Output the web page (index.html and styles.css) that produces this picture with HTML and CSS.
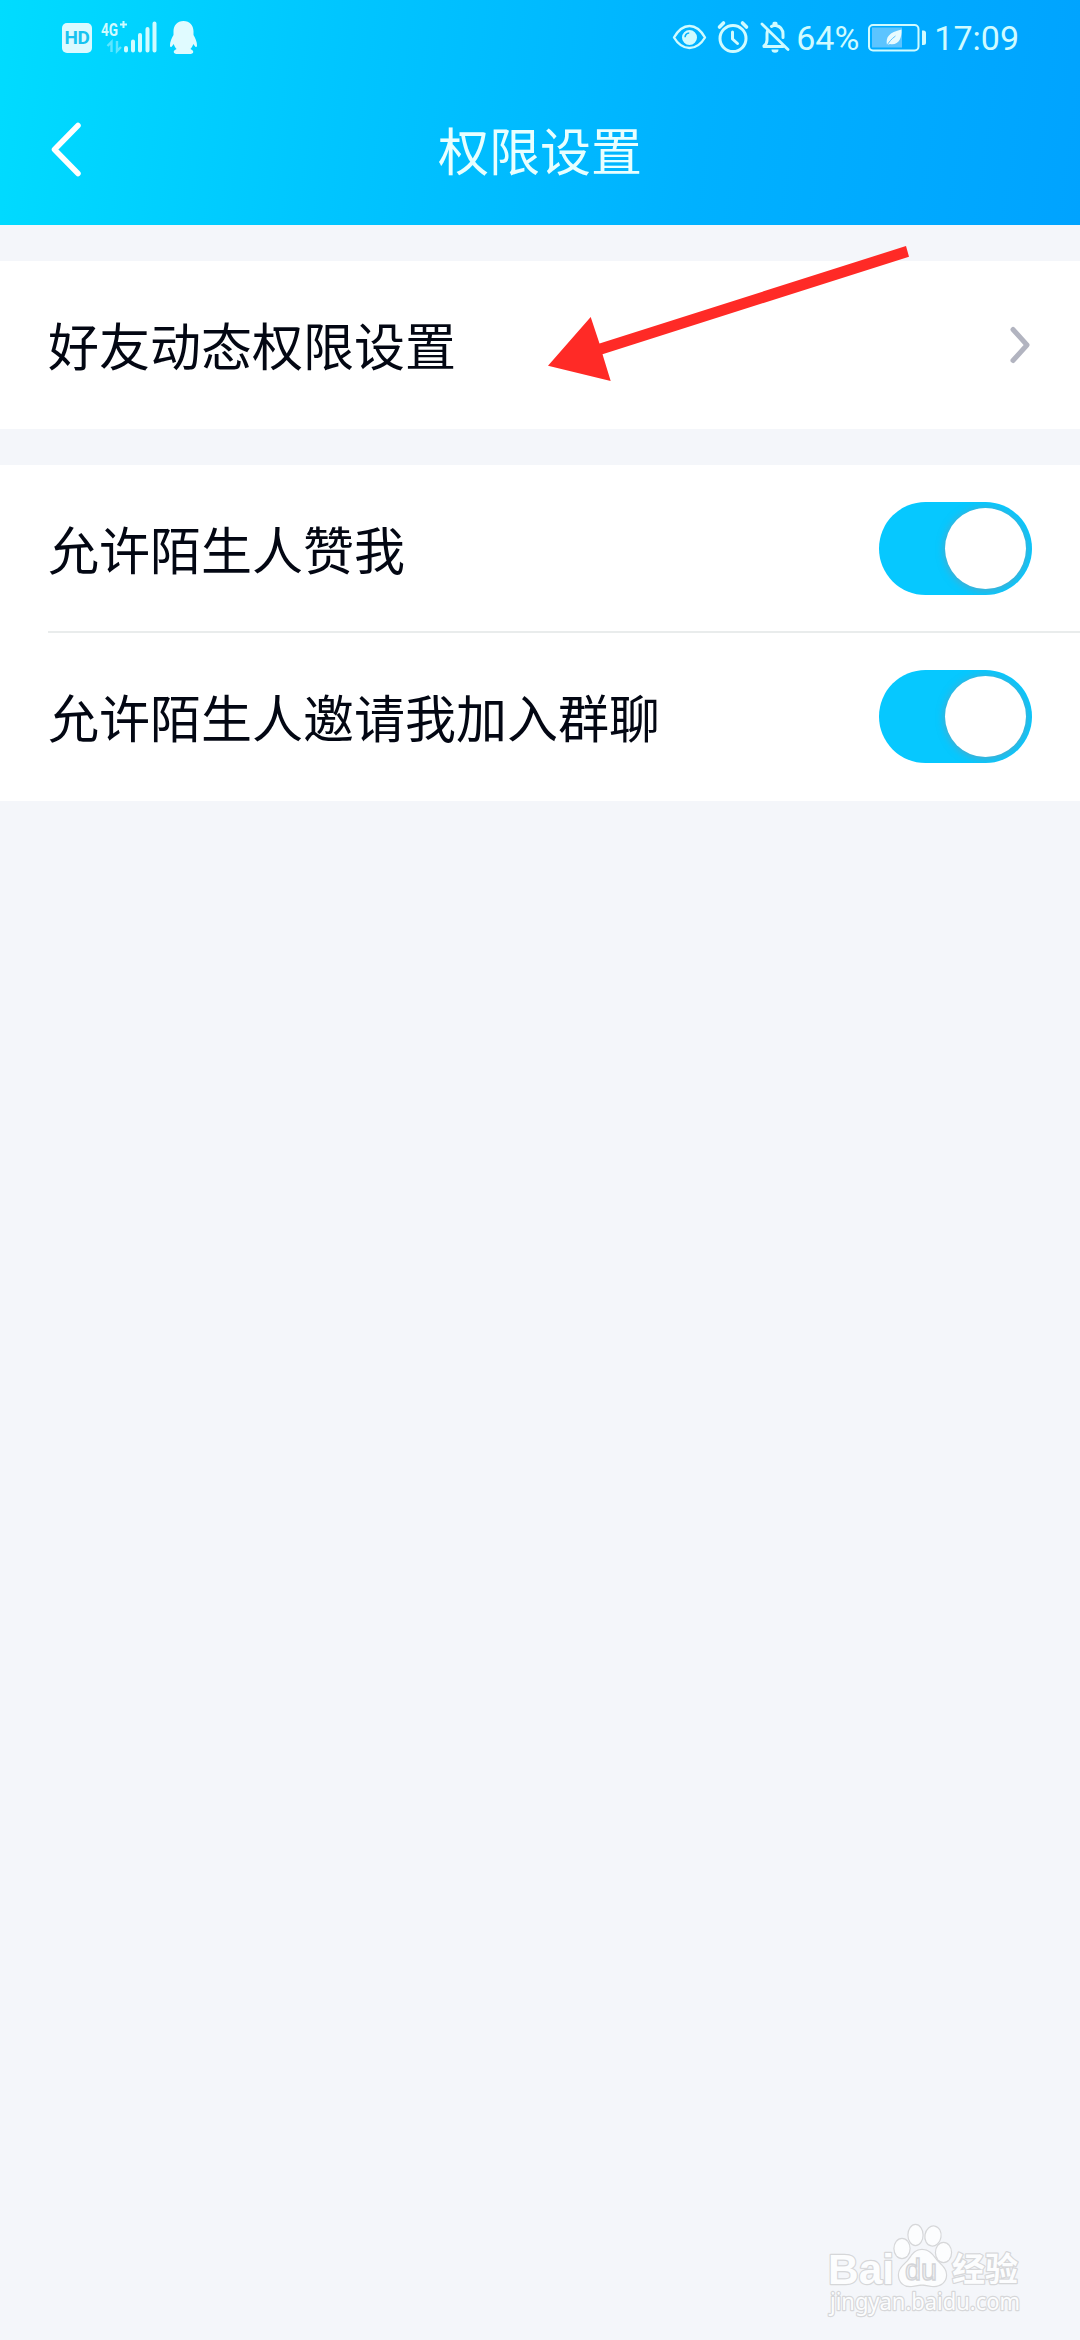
FILE: index.html
```html
<!DOCTYPE html>
<html lang="zh-CN">
<head>
<meta charset="utf-8">
<title>权限设置</title>
<link rel="stylesheet" href="styles.css">
</head>
<body>
<header class="header">
  <div class="status">
    <div class="status-left">
      <span class="hd">HD</span>
      <svg class="signal" width="58" height="44" viewBox="100 16 58 44">
        <text class="net" x="101" y="36" textLength="17" lengthAdjust="spacingAndGlyphs">4G</text>
        <path d="M120 24.500h7M123.500 21v7" stroke="currentColor" stroke-width="2"/>
        <g opacity=".45" fill="none" stroke="currentColor" stroke-width="2.400"><path d="M107.500 46l4-4v10M117 41v10l4-4"/></g>
        <path d="M126 48v2.500M133 41.500v9M140 35v15.500M147.500 29v21.500M154.500 23.500v27" stroke="currentColor" stroke-width="4" stroke-linecap="round"/>
      </svg>
      <svg class="qq" width="30" height="34" viewBox="168 21 30 34" fill="currentColor">
        <path d="M182.500 21c-6.300 0-10 4.600-10 10.300v3.700c-1.600 2.700-3.700 7-3.500 10.500.1 1.700 1 1.800 1.800.9l2-2.400c.5 1.900 1.500 3.600 2.800 5-2 .7-3.100 2-2.800 3.200.2 1.200 1.500 1.800 4 1.800h11.400c2.500 0 3.800-.6 4-1.800.3-1.200-.8-2.500-2.800-3.200 1.300-1.400 2.300-3.100 2.800-5l2 2.400c.8.900 1.700.8 1.800-.9.200-3.500-1.900-7.800-3.500-10.500v-3.700c0-5.700-3.700-10.300-10-10.300z"/>
      </svg>
    </div>
    <div class="status-right">
      <svg width="120" height="36" viewBox="670 20 120 36" fill="none" stroke="currentColor" stroke-width="2.800" stroke-linecap="round" stroke-linejoin="round">
        <path d="M673 37.500c4-7 9.500-11.500 15.500-11.500S700 30.500 704 37.500c-4 6.700-9.500 10.500-15.500 10.500S677 44.200 673 37.500z" stroke-width="2.400"/>
        <path fill="currentColor" stroke="none" fill-rule="evenodd" d="M688.500 30a7.500 7.500 0 1 0 0 15 7.500 7.500 0 0 0 0-15zm-.3 2.200v1.500c-2 .2-3.200 1.400-3.400 3.600h-1.500c0-3 1.900-5 4.900-5.100z"/>
        <circle cx="732" cy="38.500" r="13" stroke-width="3"/>
        <path d="M731.500 32v7l5 4.500" stroke-width="3"/>
        <path d="M718.500 27l4-4M745.500 27l-4-4" stroke-width="3.600"/>
        <path d="M761 24l26 25.500"/>
        <path d="M763 46.500h19M763 46c2.500-2 3-3 3-6v-6c0-1.500.3-2.500.8-3.500M770.500 26.500c1-.7 1.700-.9 2.500-1v-2.300h2v2.300c4 .8 7 4 7 9v3" stroke-width="3"/>
        <path d="M770.500 49.500h7a3.500 3.200 0 0 1-7 0z" fill="currentColor" stroke="none"/>
      </svg>
      <span class="percent">64%</span>
      <svg class="battery" width="60" height="30" viewBox="866 23 60 30">
        <rect x="868" y="25" width="49.500" height="25.500" rx="4" fill="none" stroke="currentColor" stroke-width="2"/>
        <rect x="871" y="27.500" width="30" height="20" fill="#5cc4ff"/>
        <path d="M921 30.500h1.500q2.500 0 2.500 2.500v9.500q0 2.500-2.500 2.500H921z" fill="currentColor"/>
        <path d="M886 45c-1.500-8 2-12.500 14.500-15.500.5 9-3 16-11.500 14.500z" fill="#e8fbff"/>
        <path d="M885.500 46.500c2.500-5 5-7.500 9-10.500" fill="none" stroke="#5cc4ff" stroke-width="1"/>
      </svg>
      <span class="clock">17:09</span>
    </div>
  </div>
  <nav class="nav">
    <svg class="back" width="36" height="60" viewBox="0 0 36 60"><path d="M30 6.500L6.500 30.500L30 54.500" fill="none" stroke="#fff" stroke-width="5.500" stroke-linecap="round" stroke-linejoin="round"/></svg>
    <h1 class="title">权限设置</h1>
  </nav>
</header>
<main class="content">
  <section class="card">
    <div class="row">
      <span class="label">好友动态权限设置</span>
      <svg class="more" width="22" height="40" viewBox="0 0 22 40"><path d="M4 4.500L18 20L4 35.500" fill="none" stroke="#b2b4c0" stroke-width="5" stroke-linecap="round" stroke-linejoin="round"/></svg>
    </div>
  </section>
  <section class="card">
    <div class="row divided">
      <span class="label">允许陌生人赞我</span>
      <span class="switch"><span class="knob"></span></span>
    </div>
    <div class="row">
      <span class="label">允许陌生人邀请我加入群聊</span>
      <span class="switch"><span class="knob"></span></span>
    </div>
  </section>
</main>
<svg class="arrow" width="364" height="138" viewBox="547 245 364 138"><path d="M906 246L909 256.700L602.500 354.300L610.700 381L548 365.700L590.700 317L599.500 343.500z" fill="#ff2a26"/></svg>
<svg class="watermark" width="220" height="110" viewBox="820 2215 220 110">
  <g class="mark">
    <ellipse cx="902" cy="2248.500" rx="7.500" ry="9.500"/>
    <ellipse cx="915.500" cy="2235" rx="7" ry="10"/>
    <ellipse cx="933" cy="2236" rx="7.500" ry="9.500" transform="rotate(10 933 2236)"/>
    <ellipse cx="943.500" cy="2252.500" rx="7.500" ry="9.500"/>
    <path d="M922 2250c-8 0-10 6-14 11-5 5-9 8-9 14 0 8 6 11 11 11 5 0 7-1.500 12-1.500s7 1.500 12 1.500c6 0 12-4 12-11 0-6-4-9-9-14-4-5-7-11-15-11z"/>
    <text class="bai" x="828" y="2284" textLength="66" lengthAdjust="spacingAndGlyphs">Bai</text>
    <text class="exp" x="952" y="2281" textLength="66" lengthAdjust="spacingAndGlyphs">经验</text>
    <text class="site" x="830" y="2310" textLength="190" lengthAdjust="spacingAndGlyphs">jingyan.baidu.com</text>
  </g>
  <text class="du" x="905" y="2280" textLength="32" lengthAdjust="spacingAndGlyphs">du</text>
</svg>
</body>
</html>
```
FILE: styles.css
```css
* { box-sizing: border-box; }

body {
  margin: 0;
  width: 1080px;
  height: 2340px;
  position: relative;
  overflow: hidden;
  background: #f4f6fa;
  color: #030713;
  font-family: Roboto, "Noto Sans CJK SC", sans-serif;
}

svg { display: block; flex: none; }

.header {
  height: 225px;
  background: linear-gradient(98deg, #00dcff 0%, #00c5ff 32%, #00b1ff 65%, #00a3ff 100%);
}

.status {
  height: 76px;
  padding: 0 61px 0 62px;
  display: flex;
  align-items: center;
  justify-content: space-between;
  color: #d0fbff;
}

.status-left, .status-right { display: flex; align-items: center; }

.hd {
  width: 30px;
  height: 30px;
  border-radius: 5px;
  background: #dcfaff;
  color: #18c3f0;
  font: 700 19px/30px Roboto, sans-serif;
  text-align: center;
  letter-spacing: -0.5px;
}

.signal { margin-left: 8px; }
.net { font: 700 19px Roboto, sans-serif; fill: currentColor; }
.qq { margin-left: 11px; color: #e0fbff; }

.percent, .clock {
  font-size: 34px;
  line-height: 40px;
  white-space: nowrap;
}

.percent { margin-left: 5px; }
.battery { margin-left: 8px; }
.clock { margin-left: 7px; }

.nav {
  height: 149px;
  padding: 0 48px;
  display: grid;
  grid-template-columns: 36px 1fr 36px;
}

.back { margin-top: 43px; }

.title {
  margin: 41px 0 0;
  color: #e8ffff;
  font-size: 51px;
  font-weight: 400;
  line-height: 74px;
  text-align: center;
}

.content {
  padding-top: 36px;
  display: flex;
  flex-direction: column;
  gap: 36px;
}

.card { background: #fff; }

.row {
  height: 168px;
  padding: 0 48px;
  display: flex;
  align-items: center;
  justify-content: space-between;
}

.divided {
  background: linear-gradient(#e9ecec, #e9ecec) 48px 100% / 100% 2px no-repeat;
}

.label {
  padding-top: 8px;
  font-size: 51px;
  line-height: 74px;
  white-space: nowrap;
}

.more { margin-right: 1px; }

.switch {
  width: 153px;
  height: 93px;
  margin-bottom: 1px;
  padding: 6px;
  display: flex;
  justify-content: flex-end;
  border-radius: 47px;
  background: #06c8ff;
  overflow: hidden;
}

.knob {
  width: 81px;
  height: 81px;
  border-radius: 50%;
  background: #fff;
  box-shadow: 0 1px 9px rgba(125, 150, 165, 0.75);
}

.arrow { position: absolute; left: 547px; top: 245px; }
.watermark { position: absolute; left: 820px; top: 2215px; }

.mark {
  fill: #fcfdfe;
  stroke: #d6d7d9;
  stroke-width: 2.4px;
  paint-order: stroke;
  stroke-linejoin: round;
}

.bai { font: 700 43px "Liberation Sans", sans-serif; }
.exp { font: 700 33px "Noto Sans CJK SC", sans-serif; }
.site { font: 400 23px "Noto Sans", sans-serif; }
.du { font: 400 30px "Liberation Sans", sans-serif; fill: #f2f3f5; stroke: #d2d4d7; stroke-width: 1.4px; }
```
